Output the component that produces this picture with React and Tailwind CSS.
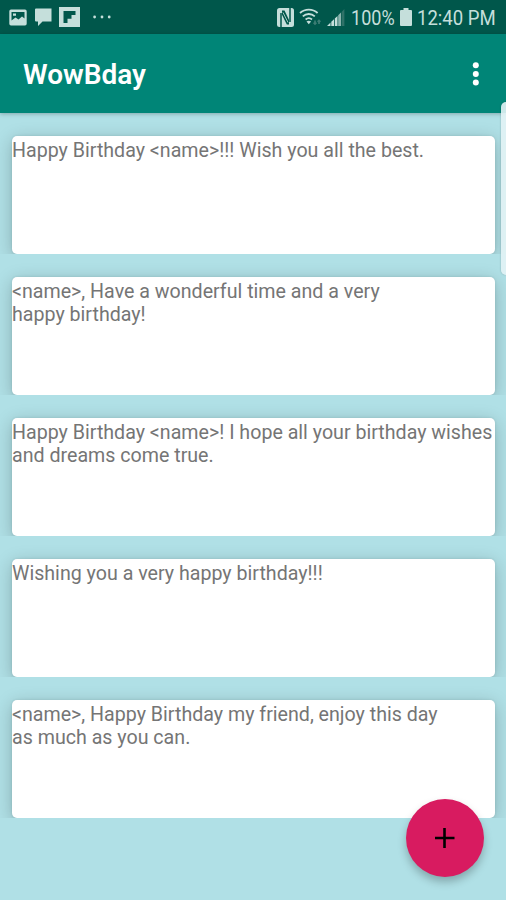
import React from 'react';

const MESSAGES = [
  ['Happy Birthday <name>!!! Wish you all the best.'],
  ['<name>, Have a wonderful time and a very', 'happy birthday!'],
  ['Happy Birthday <name>! I hope all your birthday wishes', 'and dreams come true.'],
  ['Wishing you a very happy birthday!!!'],
  ['<name>, Happy Birthday my friend, enjoy this day', 'as much as you can.'],
];

function StatusBar() {
  return (
    <div className="flex h-[34px] items-center bg-[#00574b] pl-[9px] pr-[10px] text-[#c5dfdb]">
      <svg className="h-[17px] w-[18px]" viewBox="0 0 18 17">
        <path fill="currentColor" fillRule="evenodd" d="M2 0.5h14a1.7 1.7 0 0 1 1.7 1.7v12.6a1.7 1.7 0 0 1-1.7 1.7H2a1.7 1.7 0 0 1-1.7-1.7V2.2A1.7 1.7 0 0 1 2 .5zM2.5 3v8.5l4-3 3 2 3.5-3 2.5 2V3zM4 4.5h3v2.3H4z" />
      </svg>
      <svg className="ml-2 h-[18px] w-[18px]" viewBox="0 0 18 18">
        <path fill="currentColor" d="M1 0.5h15.5v13H7.5L3 18v-4.5H1a1 1 0 0 1-1-1v-11a1 1 0 0 1 1-1z" />
      </svg>
      <svg className="ml-[6px] h-[20px] w-[21px]" viewBox="0 0 21 20">
        <path fill="currentColor" fillRule="evenodd" d="M0 0h21v20H0zM4.5 4v12h4v-4.3h4V8h4V4z" />
      </svg>
      <svg className="ml-[13px] h-1 w-[18px]" viewBox="0 0 18 4">
        <circle cx="1.6" cy="2" r="1.4" fill="currentColor" />
        <circle cx="9" cy="2" r="1.4" fill="currentColor" />
        <circle cx="16.2" cy="2" r="1.4" fill="currentColor" />
      </svg>
      <svg className="ml-auto h-[19px] w-[17px]" viewBox="0 0 17 19">
        <rect width="17" height="19" rx="2.5" fill="currentColor" />
        <path fill="none" stroke="#00574b" strokeWidth="1.5" d="M4 19V5M13 0v14" />
        <path fill="#00574b" d="M5 2.5h2.5l4.5 9.5v4.5H9.8L5 6.8z" />
        <path stroke="#c5dfdb" strokeWidth="0.8" d="M6 4.5l5 10" />
      </svg>
      <svg className="ml-[5px] h-[18px] w-[24px]" viewBox="0 0 24 18" fill="none" stroke="currentColor" strokeWidth="1.8">
        <path d="M1 5a13 13 0 0 1 17.6 0M3.8 8.3a9 9 0 0 1 12 0M6.6 11.5a5 5 0 0 1 6.4 0" />
        <path fill="currentColor" stroke="none" d="M7.5 13.5a4 4 0 0 1 4.6 0l-2.3 2.7z" />
        <path stroke="#3d7d74" strokeWidth="1.7" d="M16 12.5v3.5m-1.4-1.3L16 16l1.4-1.3M20 16v-3.5m-1.4 1.3L20 12.5l1.4 1.3" />
      </svg>
      <svg className="ml-[4px] h-[17px] w-[18px]" viewBox="0 0 18 17">
        <path fill="currentColor" d="M0 17l3.5-3.4V17zM4.3 17v-4.2l2.7-2.6V17zM7.8 17V9.4l2.7-2.5V17z" />
        <path fill="#8bb5af" d="M11.2 17V6.2L14 3.4V17z" />
        <path fill="#2f7268" d="M14.6 17V2.9L17.4 0v17z" />
      </svg>
      <span className="ml-[6px] w-[45px] whitespace-nowrap pt-[2px] text-[20.5px] leading-[32px]">
        <span className="inline-block origin-left scale-x-[0.88]">100%</span>
      </span>
      <svg className="ml-[4px] h-[18px] w-[12px]" viewBox="0 0 12 18">
        <path fill="currentColor" d="M3.5 0h5v2H11a1 1 0 0 1 1 1v14a1 1 0 0 1-1 1H1a1 1 0 0 1-1-1V3a1 1 0 0 1 1-1h2.5z" />
      </svg>
      <span className="ml-[5px] w-[79px] whitespace-nowrap pt-[2px] text-[20.5px] leading-[32px]">
        <span className="inline-block origin-left scale-x-[0.905]">12:40 PM</span>
      </span>
    </div>
  );
}

function AppBar() {
  return (
    <div className="relative z-10 flex h-[79px] items-center justify-between bg-[#008577] pl-[23px] pr-[26px] text-white shadow-[0_1px_4px_rgba(0,0,0,0.25)]">
      <h1 className="pt-[3px] text-[28px] font-semibold leading-[76px]">WowBday</h1>
      <svg className="h-6 w-[9px]" viewBox="0 0 9 24" fill="currentColor">
        <circle cx="4.8" cy="3.3" r="3" />
        <circle cx="4.8" cy="11.9" r="3" />
        <circle cx="4.8" cy="20.4" r="3" />
      </svg>
    </div>
  );
}

// each row clips the card's shadow at its bottom edge
function MessageRow({ lines }) {
  return (
    <div className="h-[141px] overflow-hidden pl-3 pr-[11px] pt-[23px]">
      <div className="h-[118px] rounded-[5px] bg-white pt-[3px] text-[19.64px] leading-[23px] text-[#757575] shadow-[0_4px_18px_rgba(0,0,0,0.22),0_0_3px_rgba(0,0,0,0.1)]">
        {lines.map((line) => (
          <p key={line} className="whitespace-nowrap">{line}</p>
        ))}
      </div>
    </div>
  );
}

export default function App() {
  return (
    <div className="relative h-[900px] w-[506px] overflow-hidden bg-[#b0e0e6]" style={{ fontFamily: 'Roboto, sans-serif' }}>
      <StatusBar />
      <AppBar />
      <main>
        {MESSAGES.map((lines) => (
          <MessageRow key={lines[0]} lines={lines} />
        ))}
      </main>
      <div className="absolute right-0 top-[102px] z-20 h-[173px] w-[5px] rounded-l-[5px] bg-[#e3f3f5]/90 shadow-[0_0_2px_rgba(0,0,0,0.25)]" />
      <button className="absolute left-[406px] top-[799px] z-20 flex h-[78px] w-[78px] items-center justify-center rounded-full bg-[#d81b60] shadow-[0_5px_9px_rgba(0,0,0,0.25)]">
        <svg className="h-5 w-5" viewBox="0 0 20 20">
          <path stroke="#000" strokeWidth="2.6" d="M9.5 0v20M0 10h19.5" />
        </svg>
      </button>
    </div>
  );
}
